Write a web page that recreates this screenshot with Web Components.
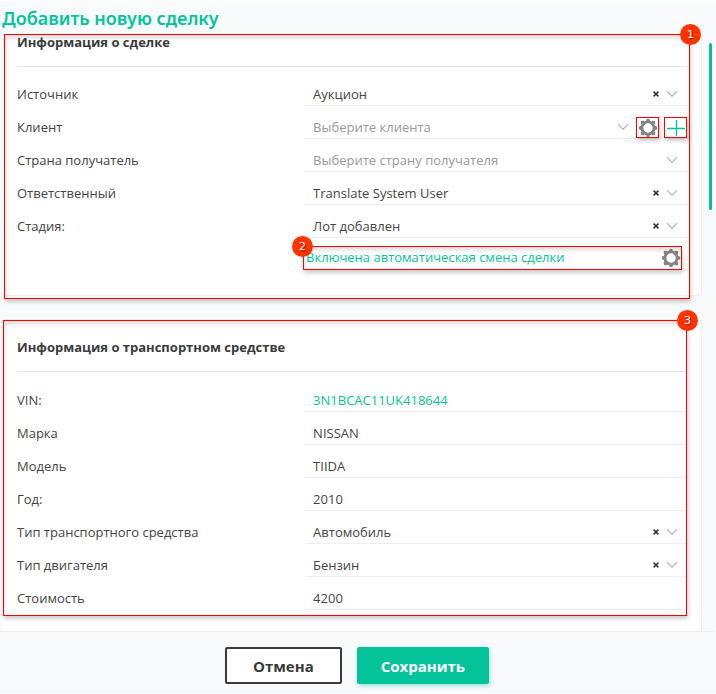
<!DOCTYPE html>
<html lang="ru">
<head>
<meta charset="utf-8">
<title>Добавить новую сделку</title>
<style>
  body {
    margin: 0;
    background: #f8fafc;
    font-family: "Open Sans", "Noto Sans", sans-serif;
    font-size: 13px;
    color: #444;
    --accent: #04c39b;
    --line: #eceeef;
    --mark: #ff0000;
  }
</style>
</head>
<body>
<deal-form heading="Добавить новую сделку">
  <deal-card heading="Информация о сделке" class="first">
    <call-out slot="mark" number="1" class="frame"></call-out>
    <deal-field type="select" label="Источник" value="Аукцион"></deal-field>
    <deal-field type="select" label="Клиент" placeholder="Выберите клиента">
      <icon-button slot="tools" icon="gear" label="Настройки клиента" marked></icon-button>
      <icon-button slot="tools" icon="plus" label="Добавить клиента" marked></icon-button>
    </deal-field>
    <deal-field type="select" label="Страна получатель" placeholder="Выберите страну получателя"></deal-field>
    <deal-field type="select" label="Ответственный" value="Translate System User"></deal-field>
    <deal-field type="select" label="Стадия:" value="Лот добавлен"></deal-field>
    <stage-note>Включена автоматическая смена сделки</stage-note>
  </deal-card>
  <deal-card heading="Информация о транспортном средстве" class="second">
    <call-out slot="mark" number="3" class="frame"></call-out>
    <deal-field type="text" label="VIN:" value="3N1BCAC11UK418644" accent></deal-field>
    <deal-field type="text" label="Марка" value="NISSAN"></deal-field>
    <deal-field type="text" label="Модель" value="TIIDA"></deal-field>
    <deal-field type="text" label="Год:" value="2010"></deal-field>
    <deal-field type="select" label="Тип транспортного средства" value="Автомобиль"></deal-field>
    <deal-field type="select" label="Тип двигателя" value="Бензин"></deal-field>
    <deal-field type="text" label="Стоимость" value="4200"></deal-field>
  </deal-card>
  <form-button slot="actions">Отмена</form-button>
  <form-button slot="actions" primary>Сохранить</form-button>
</deal-form>

<script>
const icons = {
  gear: `<svg width="20" height="20" viewBox="0 0 20 20" aria-hidden="true">
    <circle cx="10" cy="10" r="6.1" fill="none" stroke="#858585" stroke-width="2.8"/>
    <g fill="#858585">
      <circle cx="10" cy="2.6" r="1.9"/>
      <circle cx="10" cy="17.4" r="1.9"/>
      <circle cx="2.6" cy="10" r="1.9"/>
      <circle cx="17.4" cy="10" r="1.9"/>
      <rect x="2.8" y="2.8" width="3.8" height="3.8" rx="1"/>
      <rect x="13.4" y="2.8" width="3.8" height="3.8" rx="1"/>
      <rect x="2.8" y="13.4" width="3.8" height="3.8" rx="1"/>
      <rect x="13.4" y="13.4" width="3.8" height="3.8" rx="1"/>
    </g>
  </svg>`,
  plus: `<svg width="20" height="20" viewBox="0 0 20 20" aria-hidden="true">
    <path d="M10.5 2v16M1 10.5h18" stroke="#04c39b" stroke-width="1.3" fill="none"/>
  </svg>`,
  chevron: `<svg width="12" height="8" viewBox="0 0 12 8" aria-hidden="true">
    <path d="M1 1.2L6 6.4L11 1.2" stroke="#b5b5b5" stroke-width="1.2" fill="none"/>
  </svg>`,
  cross: `<svg width="6" height="6" viewBox="0 0 6 6" aria-hidden="true">
    <path d="M.6 .6L5.4 5.4M5.4 .6L.6 5.4" stroke="#333" stroke-width="1.5" fill="none"/>
  </svg>`
}

customElements.define('deal-form',
  class extends HTMLElement {
    constructor () {
      super()
      this.attachShadow({ mode: 'open' }).innerHTML = `
        <style>
          :host {
            display: flex;
            flex-direction: column;
            height: 100vh;
            box-sizing: border-box;
            border-top: 1px solid #fff;
            border-bottom: 1px solid #fff;
          }
          h1 {
            margin: 0;
            padding: 4px 2px 3px;
            font-family: "Noto Sans", "Open Sans", sans-serif;
            font-size: 18px;
            line-height: 26px;
            font-weight: 600;
            color: var(--accent);
          }
          main {
            position: relative;
            flex: 1;
            min-height: 0;
            padding: 0 14px 0 2px;
          }
          .cards {
            display: flex;
            flex-direction: column;
            gap: 23px;
          }
          .thumb {
            position: absolute;
            top: 9px;
            right: 4px;
            width: 3px;
            height: 28%;
            border-radius: 2px;
            background: var(--accent);
          }
          footer {
            position: relative;
            display: flex;
            justify-content: center;
            gap: 15px;
            margin-right: 2px;
            padding: 15px 0 9px;
            border-top: 1px solid var(--line);
            background: #f8fafc;
          }
        </style>
        <h1></h1>
        <main>
          <div class="cards"><slot></slot></div>
          <div class="thumb"></div>
        </main>
        <footer><slot name="actions"></slot></footer>`
    }

    connectedCallback () {
      this.shadowRoot.querySelector('h1').textContent = this.getAttribute('heading')
    }
  }
)

/**
 * White card with a heading and a list of fields.
 */
customElements.define('deal-card',
  class extends HTMLElement {
    constructor () {
      super()
      this.attachShadow({ mode: 'open' }).innerHTML = `
        <style>
          :host {
            display: block;
            position: relative;
            box-sizing: border-box;
            padding: 19px 14px 21px 15px;
            border: 1px solid var(--line);
            border-left-width: 0;
            border-radius: 4px;
            background: #fff;
          }
          :host(.first) {
            padding-top: 0;
            padding-bottom: 25px;
            border-top: 0;
            border-radius: 0 0 4px 4px;
          }
          :host(.second) {
            border-bottom: 0;
            border-radius: 4px 4px 0 0;
          }
          h2 {
            margin: 0 0 6px;
            padding-bottom: 16px;
            border-bottom: 1px solid #e3e7ea;
            font-size: 13px;
            line-height: 16px;
            font-weight: 700;
            color: #3a3a3a;
          }
          :host(.second) h2 { margin-bottom: 7px; }
          ::slotted(.frame) {
            position: absolute;
            inset: 0 11px -4px 2px;
          }
          :host(.second) ::slotted(.frame) {
            inset: 0 14px 15px 1px;
          }
        </style>
        <h2></h2>
        <slot></slot>
        <slot name="mark"></slot>`
    }

    connectedCallback () {
      this.shadowRoot.querySelector('h2').textContent = this.getAttribute('heading')
    }
  }
)

/**
 * Red frame with a numbered badge on one of its corners.
 */
customElements.define('call-out',
  class extends HTMLElement {
    constructor () {
      super()
      this.attachShadow({ mode: 'open' }).innerHTML = `
        <style>
          :host {
            display: block;
            box-sizing: border-box;
            border: 1px solid var(--mark);
            box-shadow: 1px 3px 4px rgba(0, 0, 0, .2), inset 1px 3px 4px rgba(0, 0, 0, .14);
            pointer-events: none;
          }
          span {
            position: absolute;
            top: -11px;
            right: -12px;
            width: 21px;
            height: 21px;
            border-radius: 50%;
            background: #ff3300;
            color: #fff;
            font: 11px/21px "DejaVu Sans", sans-serif;
            text-align: center;
            text-shadow: 1px 1px 1px rgba(0, 0, 0, .5);
          }
          :host([side="left"]) span {
            right: auto;
            left: -12px;
          }
        </style>
        <span></span>`
    }

    connectedCallback () {
      this.shadowRoot.querySelector('span').textContent = this.getAttribute('number')
    }
  }
)

/**
 * Label with a text box or a drop-down.
 */
customElements.define('deal-field',
  class extends HTMLElement {
    constructor () {
      super()
      this.attachShadow({ mode: 'open' }).innerHTML = `
        <style>
          :host {
            display: grid;
            grid-template-columns: 43% 1fr;
            height: 33px;
          }
          label {
            align-self: end;
            padding-bottom: 2px;
            line-height: 20px;
          }
          .box {
            display: flex;
            align-items: center;
            align-self: end;
            height: 20px;
            padding: 0 9px 1px 8px;
            border-bottom: 1px solid var(--line);
          }
          input, select {
            flex: 1;
            min-width: 0;
            height: 20px;
            margin: 0;
            padding: 0;
            border: 0;
            outline: 0;
            appearance: none;
            background: none;
            font: inherit;
            color: inherit;
          }
          :host([accent]) input { color: var(--accent); }
          :host([placeholder]) select { color: #999; }
          button {
            display: flex;
            margin: 0 7px 0 0;
            padding: 0;
            border: 0;
            background: none;
          }
          ::slotted(icon-button) { margin-left: 5px; }
          .box.tools { padding-right: 0; }
          .tools svg { margin-right: 2px; }
        </style>
        <label for="control"></label>
        <div class="box"></div>`
    }

    connectedCallback () {
      const box = this.shadowRoot.querySelector('.box')
      const value = this.getAttribute('value')
      this.shadowRoot.querySelector('label').textContent = this.getAttribute('label')

      if (this.getAttribute('type') === 'text') {
        box.innerHTML = '<input id="control" type="text">'
        box.firstChild.value = value
        return
      }

      box.innerHTML = `<select id="control"><option></option></select>
        ${value ? `<button type="button" aria-label="Очистить">${icons.cross}</button>` : ''}
        ${icons.chevron}
        <slot name="tools"></slot>`
      box.querySelector('option').textContent = value || this.getAttribute('placeholder')
      box.classList.toggle('tools', this.querySelector('[slot="tools"]') !== null)
    }
  }
)

/**
 * Small square button with an icon.
 */
customElements.define('icon-button',
  class extends HTMLElement {
    constructor () {
      super()
      this.attachShadow({ mode: 'open' }).innerHTML = `
        <style>
          :host { display: block; }
          button {
            display: grid;
            place-items: center;
            width: 23px;
            height: 21px;
            padding: 0;
            border: 0;
            background: none;
          }
          :host([marked]) button {
            border: 1px solid var(--mark);
            box-shadow: 1px 3px 4px rgba(0, 0, 0, .2);
          }
        </style>
        <button type="button"></button>`
    }

    connectedCallback () {
      const button = this.shadowRoot.querySelector('button')
      button.setAttribute('aria-label', this.getAttribute('label'))
      button.innerHTML = icons[this.getAttribute('icon')]
    }
  }
)

/**
 * Link line below the stage field.
 */
customElements.define('stage-note',
  class extends HTMLElement {
    constructor () {
      super()
      this.attachShadow({ mode: 'open' }).innerHTML = `
        <style>
          :host {
            display: grid;
            grid-template-columns: 43% 1fr;
            padding-top: 8px;
          }
          .line {
            grid-column: 2;
            position: relative;
            display: flex;
            justify-content: space-between;
            margin: 0 5px 0 -2px;
            padding: 1px 0 2px 3px;
          }
          a {
            line-height: 20px;
            color: var(--accent);
            text-decoration: none;
          }
          call-out {
            position: absolute;
            inset: 0;
          }
        </style>
        <div class="line">
          <a href="#"><slot></slot></a>
          <icon-button icon="gear" label="Настройки смены"></icon-button>
          <call-out number="2" side="left"></call-out>
        </div>`
    }
  }
)

/**
 * Action button in the bottom bar.
 */
customElements.define('form-button',
  class extends HTMLElement {
    constructor () {
      super()
      this.attachShadow({ mode: 'open' }).innerHTML = `
        <style>
          :host { display: block; }
          button {
            box-sizing: border-box;
            height: 37px;
            padding: 0 26px;
            border: 2px solid #3a3a3a;
            border-radius: 2px;
            background: #fff;
            font: 700 15px/20px "Open Sans", "Noto Sans", sans-serif;
            color: #3a3a3a;
          }
          :host([primary]) button {
            padding: 0 22px;
            border-color: var(--accent);
            background: var(--accent);
            box-shadow: 1px 2px 4px rgba(4, 195, 155, .4);
            color: #fff;
          }
        </style>
        <button type="button"><slot></slot></button>`
    }
  }
)
</script>
</body>
</html>
